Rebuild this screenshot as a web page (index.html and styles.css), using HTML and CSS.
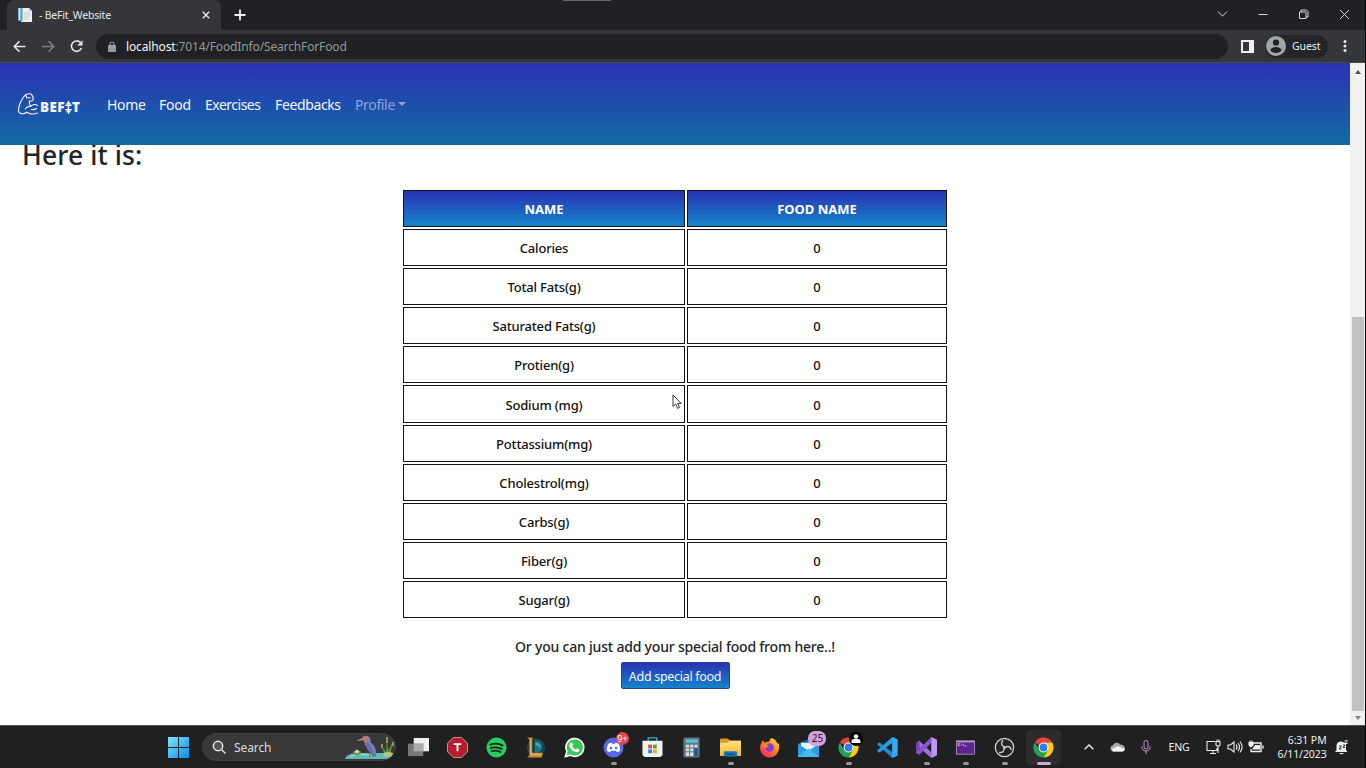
FILE: index.html
```html
<!DOCTYPE html>
<html lang="en">
<head>
<meta charset="utf-8">
<title>- BeFit_Website</title>
<link rel="stylesheet" href="styles.css">
</head>
<body>
<svg width="0" height="0" class="defs" aria-hidden="true">
  <defs>
    <linearGradient id="win" x1="0" y1="0" x2="1" y2="1"><stop offset="0" stop-color="#7de4fb"/><stop offset="1" stop-color="#0a8df0"/></linearGradient>
    <linearGradient id="fire" x1="1" y1="0" x2="0.2" y2="1"><stop offset="0" stop-color="#fff04a"/><stop offset=".45" stop-color="#ff8a20"/><stop offset="1" stop-color="#f5206a"/></linearGradient>
    <linearGradient id="folder" x1="0" y1="0" x2="0" y2="1"><stop offset="0" stop-color="#ffe08a"/><stop offset="1" stop-color="#f8b82a"/></linearGradient>
    <symbol id="chrome" viewBox="0 0 22 22">
      <path d="M11 11 1.9 5.75A10.5 10.5 0 0 1 20.1 5.75H11Z" fill="#e94335"/>
      <path d="M20.1 5.75A10.5 10.5 0 0 1 11 21.5L15.5 13.6 11 5.75Z" fill="#fdc912"/>
      <path d="M1.9 5.75A10.5 10.5 0 0 0 11 21.5L15.5 13.6H6.5Z" fill="#23a455"/>
      <circle cx="11" cy="11" r="5.2" fill="#fff"/><circle cx="11" cy="11" r="4.1" fill="#2f7de9"/>
    </symbol>
  </defs>
</svg>
<div class="screen">
  <header class="tabstrip">
    <div class="tab">
      <svg class="favicon" viewBox="0 0 16 16"><path d="M4 1h8l3 3v11H4z" fill="#e9eef1"/><path d="M1 1h4v12.500H1z" fill="#78b6d8"/><path d="M2.500 1v12.500" stroke="#d5edf8"/><path d="M5 1v13" stroke="#4a738a" stroke-width=".8"/><path d="M12 1v3h3" fill="#b6c4cb"/><path d="M7 6h6M7 8h6M7 10h6M7 12h4" stroke="#c0c7ca" stroke-width=".8"/></svg>
      <span class="tab-title">- BeFit_Website</span>
      <svg class="tab-close" viewBox="0 0 8 8"><path d="m.8.8 6.4 6.4M7.2.8.8 7.2" stroke="#e8eaed" stroke-width="1.4"/></svg>
    </div>
    <svg class="new-tab" viewBox="0 0 12 12"><path d="M6 .5v11M.5 6h11" stroke="#eceef0" stroke-width="1.8"/></svg>
    <i class="grab"></i>
    <svg class="winbtns" viewBox="0 0 140 16" fill="none" stroke="#d6d7d8"><path d="m5 5.500 4.500 4.700L14 5.500M45.500 8.500h9M86.500 6h6.500v6.500h-6.500v-6.500ZM88 6V4h5.500l1.500 1.500v5.500h-2M127 4l9 9M136 4l-9 9"/></svg>
  </header>
  <div class="toolbar">
    <svg class="navbtns" viewBox="0 0 80 18" fill="none" stroke-width="1.6"><path d="M14 9.500H25.500M19.500 4.300 14.300 9.500l5.200 5.200" stroke="#e5e7e9"/><path d="M42 9.500H53.500M48.500 4.300 53.700 9.500 48.500 14.700" stroke="#7d7f82"/><path d="M80.300 5.400A5.200 5.200 0 1 0 81.500 11" stroke="#e5e7e9"/><path d="M82.500 3.200v5.300h-5.300z" fill="#e5e7e9"/></svg>
    <div class="omnibox">
      <svg class="lock" viewBox="0 0 8 11"><rect y="4" width="8" height="7" rx="1" fill="#999b9e"/><path d="M2 5V3a2 2 0 0 1 4 0v2" fill="none" stroke="#999b9e" stroke-width="1.200"/></svg>
      <span class="url"><b>localhost</b>:7014/FoodInfo/SearchForFood</span>
    </div>
    <svg class="panel-icon" viewBox="0 0 13 13"><path fill="#f0f1f2" d="M0 0h13v13H0zM2 2v9h6V2z" fill-rule="evenodd"/></svg>
    <div class="guest">
      <svg viewBox="0 0 20 20"><circle cx="10" cy="10" r="10" fill="#a0a5aa"/><circle cx="10" cy="6.500" r="3.100" fill="#202124"/><path d="M4.200 14c1.500-2.200 3.500-3 5.800-3s4.300.8 5.800 3c-1.300 1.900-3.400 3-5.800 3s-4.500-1.100-5.800-3z" fill="#202124"/></svg>
      <span>Guest</span>
    </div>
    <svg class="dots" viewBox="0 0 4 14" fill="#eceef0"><circle cx="2" cy="2.500" r="1.500"/><circle cx="2" cy="7" r="1.500"/><circle cx="2" cy="11.500" r="1.500"/></svg>
  </div>

  <div class="viewport">
    <main class="page">
      <nav class="navbar">
        <div class="brand">
          <svg class="arm" viewBox="0 0 22 22" fill="none" stroke="#eef3ff" stroke-width="1.150" stroke-linejoin="round" stroke-linecap="round"><path d="M20 12.500c-2-1.500-5-1.300-7 1-.6-1.600-1.700-3-1.200-5.500 1.500.3 3 .1 3.800-1C16 5 15.500 3 14 1.300c-2-.8-4-.7-6 .4C5 5 2 10.500 1 16c-.3 2.800.8 4.500 3.500 4.700 2 .1 3.500-.5 4.700-1.500 3 2 7 2.200 10.800.8M8.500 2.500 9.500 5l3-.3M13 13.500c-2.300-.3-4 .5-5 2.300M14 16.500c2 .3 3.800 0 5-1"/></svg>
          <span class="word">BEF</span>
          <svg class="barbell" viewBox="0 0 7 13" fill="none" stroke="#eef3ff"><path d="M3.500 0v13" stroke-width="1.500"/><path d="M1.500 2.500h4M.3 4.300h6.400M.3 8.700h6.400M1.500 10.500h4" stroke-width="1.500"/></svg>
          <span class="word">T</span>
        </div>
        <a class="n1">Home</a><a class="n2">Food</a><a class="n3">Exercises</a><a class="n4">Feedbacks</a><a class="n5">Profile</a><i class="caret"></i>
      </nav>
      <h1>Here it is:</h1>
      <div class="facts">
        <div class="head">NAME</div><div class="head">FOOD NAME</div>
        <div>Calories</div><div>0</div>
        <div>Total Fats(g)</div><div>0</div>
        <div>Saturated Fats(g)</div><div>0</div>
        <div>Protien(g)</div><div>0</div>
        <div>Sodium (mg)</div><div>0</div>
        <div>Pottassium(mg)</div><div>0</div>
        <div>Cholestrol(mg)</div><div>0</div>
        <div>Carbs(g)</div><div>0</div>
        <div>Fiber(g)</div><div>0</div>
        <div>Sugar(g)</div><div>0</div>
      </div>
      <p class="hint">Or you can just add your special food from here..!</p>
      <button class="add">Add special food</button>
      <svg class="cursor" viewBox="0 0 10 16"><path d="M1 1v11.500l2.700-2.400 1.900 4.300 1.900-.9-1.900-4.100h3.600z" fill="#fff" stroke="#222" stroke-width=".9"/></svg>
    </main>
    <div class="scrollbar"><i class="up"></i><div class="thumb"></div><i class="down"></i></div>
  </div>

  <footer class="taskbar">
    <svg class="start" viewBox="0 0 21 21" fill="url(#win)"><path d="M0 0h10v10H0zM11 0h10v10H11zM0 11h10v10H0zM11 11h10v10H11z"/></svg>
    <div class="search">
      <svg class="glass" viewBox="0 0 14 14" fill="#555" stroke="#e8e8e8" stroke-width="1.500"><circle cx="6" cy="6" r="4.700"/><path d="m9.500 9.500 4 4"/></svg>
      <span>Search</span>
      <svg class="heron" viewBox="0 0 50 26"><path d="M0 25c1-4 6-6 14-6h34c-1 4-4 6-8 6z" fill="#65b9b5"/><path d="M5 23c8-3 15-3 22-1" stroke="#a6ded8" fill="none"/><path d="m11 7 7-3v2z" fill="#b9a99a"/><path d="M17 4c2-3 6-3 8 0 1 3 0 4 2 6l-6 3c1-4-1-5-4-8z" fill="#8f7fa0"/><path d="M17 4c2-2 4-2 5 0 0 2-1 3 0 6l-2 2c0-4-1-5-3-7z" fill="#c27a55"/><path d="M21 8c7-1 11 5 10 15-5-3-11-7-10-15z" fill="#6272b0"/><path d="M24 9c4 3 5 6 6 11" stroke="#8999cd" fill="none"/><path d="M25 17v6m3-3v3" stroke="#5c4f4a"/><ellipse cx="12" cy="19" rx="4" ry="2.400" fill="#6e9556"/><circle cx="12" cy="17.500" r="1.800" fill="#e8d5a4"/><path d="m40 21-4-10 5 7 1-14 1 13 5-9-3 13z" fill="#688f3a"/><path d="M37 10v4M42 3v6M48 8v4" stroke="#a8b64d" stroke-width="1.500"/><ellipse cx="43" cy="20.500" rx="5" ry="2.400" fill="#acc776"/></svg>
    </div>
    <div class="apps">
      <div class="app"><svg viewBox="0 0 22 22"><path d="M6 1h16v14H6z" fill="#eee"/><path d="M0 7h16v13H0z" fill="#777"/><path d="M6 7h10v8H6z" fill="#aaa"/></svg></div>
      <div class="app"><svg viewBox="0 0 22 22"><path d="M6.600.5h8.800l6.100 6.100v8.800l-6.100 6.100H6.600L.5 15.400V6.600z" fill="#b51e30" stroke="#d69299"/><path d="M7 7.500h8M11 7v8" stroke="#fff" stroke-width="2"/></svg></div>
      <div class="app"><svg viewBox="0 0 22 22"><circle cx="11" cy="11" r="10.500" fill="#27cf63"/><path d="M4.500 8c4.500-1.600 9.500-1 13 1M5 11.500c4-1.200 8-.7 11.500 1M5.800 14.800c3.500-.9 6.500-.6 9.300 1" stroke="#17231a" stroke-width="1.900" fill="none" stroke-linecap="round"/></svg></div>
      <div class="app"><svg viewBox="0 0 22 22"><circle cx="11.500" cy="11" r="8.800" fill="#103844" stroke="#35545b"/><path d="M10 4c6-1 9 3 8 8-1 3-4 5-8 5z" fill="#187684"/><path d="M11 6c4 0 6 3 5 6-2-3-3-3-5-3z" fill="#4bb0b7"/><path d="M2.500.5h6l-1 2v14H19l-1.500 5H2.500l2-2.500V3z" fill="#c59440" stroke="#745019" stroke-width=".6"/><path d="M6 2v16h11" stroke="#e9c474" fill="none"/></svg></div>
      <div class="app"><svg viewBox="0 0 22 22"><path d="M1.500 20.500 3 15A9.300 9.300 0 1 1 6.800 19z" fill="#38c758" stroke="#fff" stroke-width="1.700"/><path d="M6.800 6.200c1-.9 1.700-.5 2 .3l.7 1.700-.9 1.200c.9 1.900 2 2.900 3.900 3.800l1.200-1.300 2.300 1.200c.4 2-1.500 3-3 2.800-3.600-.3-8-4.500-7.200-7.700.1-.9.500-1.600 1-2z" fill="#fff"/></svg></div>
      <div class="app run"><svg viewBox="0 0 22 22"><circle cx="11" cy="11" r="10.500" fill="#5667ed"/><path d="M6 6.500 9 6l.7 1h2.600l.7-1 3 .5c1.500 2.500 2.200 5 2 8-1 .8-2.200 1.300-3.500 1.500l-.9-1.500H8.400L7.500 16c-1.300-.2-2.500-.7-3.500-1.500-.2-3 .5-5.500 2-8z" fill="#fff"/><circle cx="8.300" cy="11.500" r="1.400" fill="#5667ed"/><circle cx="13.700" cy="11.500" r="1.400" fill="#5667ed"/></svg><span class="badge red">9+</span></div>
      <div class="app"><svg viewBox="0 0 22 22"><path d="M6.500 5V1h9v4" fill="none" stroke="#3ca8d7" stroke-width="1.400"/><path d="M.5 4h21v15l-2.500 2H3L.5 19z" fill="#f1f1f1"/><path d="M6.500 8h4v4h-4z" fill="#d85335"/><path d="M11.500 8h4v4h-4z" fill="#6b9b38"/><path d="M6.500 13h4v4h-4z" fill="#248bd0"/><path d="M11.500 13h4v4h-4z" fill="#f0ad32"/></svg></div>
      <div class="app"><svg viewBox="0 0 22 22"><rect x="2.500" y=".5" width="17" height="21" rx="1.500" fill="#65747e"/><path d="M5 2.500h12.500V6H5z" fill="#55c3e5"/><path d="M5 8h3.500v3H5zm4.500 0H13v3H9.500zM14 8h3.500v3H14zM5 12h3.500v3H5zm4.500 0H13v3H9.500zM5 16h3.500v4H5zm4.500 0H13v4H9.500z" fill="#d4dde1"/><path d="M14 12h3.500v8H14z" fill="#16589f"/></svg></div>
      <div class="app run"><svg viewBox="0 0 22 22"><path d="M0 3q0-1.500 1.500-1.500H8L11 4h11v4H0z" fill="#d79b25"/><path d="M0 6h8l2-2h12v16H0z" fill="url(#folder)"/><path d="M4 20.500v-4Q4 15 5.500 15h11q1.500 0 1.500 1.500v4z" fill="#1b76b8"/><path d="M7 18h8" stroke="#0b4f86" stroke-width="1.500"/></svg></div>
      <div class="app"><svg viewBox="0 0 22 22"><path d="M13 1c4 1 6 4 6 6l1.500-.5C23 14 18 21.500 11 21.500S-.2 15 1.500 8.500L4 3.500 6 6c2-1 3-1 4.500-.8C11 3 12 2 13 1z" fill="url(#fire)"/><circle cx="11" cy="11" r="4.500" fill="#823ed0"/><path d="M3.500 8c3-1 5-.5 7 1-1 1.500-3 1-4 3-1-.5-2.500-2-3-4z" fill="#ff8a25"/></svg></div>
      <div class="app"><svg viewBox="0 0 22 22"><path d="M0 7 11 2l11 5v14H0z" fill="#1268b2"/><path d="M3 6h16v9H3z" fill="#e9f2f8"/><path d="m0 7 11 7.500L22 7v14H0z" fill="#2c9fe1"/><path d="m0 21 11-9 11 9z" fill="#48b9ef"/></svg><span class="badge pink">25</span></div>
      <div class="app run"><svg viewBox="0 0 22 22"><use href="#chrome"/></svg><span class="badge person"><svg viewBox="0 0 14 14" fill="#fff"><circle cx="7" cy="4.500" r="2.300"/><path d="M2.500 11V9Q2.500 7 5 7h4q2.500 0 2.500 2v2z"/></svg></span></div>
      <div class="app"><svg viewBox="0 0 22 22"><path d="m16 0 5.500 2.500v17L16 22 0 7.500 2.500 5.500 16 16z" fill="#2489ca"/><path d="M16 0v6L2.500 16.500 0 14.500z" fill="#249fe1"/><path d="m16 0 5.500 2.500v17L16 22z" fill="#35aaf0"/></svg></div>
      <div class="app run"><svg viewBox="0 0 22 22"><path d="M0 6 3.500 4 16 16v6L0 8z" fill="#9c70dc"/><path d="M0 6v11l3.500 1.500V4z" fill="#7543ad"/><path d="M3.500 18.500 16 6V0L0 16z" fill="#8856c8"/><path d="m16 0 6 2.800v16.400L16 22z" fill="#bd98f4"/></svg></div>
      <div class="app run"><svg viewBox="0 0 22 22"><path d="M1.500 4h19v14h-19z" fill="#5d248e" stroke="#a88abd"/><path d="M2 5h18" stroke="#d3c4dd"/><path d="M5 7H3.500v2H5M6.500 7v.8m0 1v.5M8 7l1 2.300M10 9.300h2" stroke="#eee" stroke-width=".8" fill="none"/></svg></div>
      <div class="app run"><svg viewBox="0 0 22 22"><circle cx="11" cy="11" r="9.600" fill="#242426" stroke="#d0d0d0" stroke-width="1.300"/><g fill="none" stroke="#c8c8c8" stroke-width="1.500"><path id="blade" d="M11 10.500C7.500 9 7 6 9.500 3.500"/><use href="#blade" transform="rotate(120 11 11)"/><use href="#blade" transform="rotate(240 11 11)"/></g><circle cx="11" cy="11" r="1.500" fill="#c8c8c8"/></svg></div>
      <div class="app run active"><svg viewBox="0 0 22 22"><use href="#chrome"/></svg></div>
    </div>
    <div class="tray">
      <svg class="chev" viewBox="0 0 10 6"><path d="m.7 5.200 4.300-4.200 4.300 4.200" stroke="#eee" fill="none" stroke-width="1.400"/></svg>
      <svg class="cloud" viewBox="0 0 15 10"><path d="M3.500 9.500A3.200 3.200 0 0 1 3 3.200C4 .5 8-.3 10 2.500c3 0 5 2 5 4s-1.500 3-3 3z" fill="#aaa"/><path d="M3.500 9.500c-2-.5-2-3 .5-3.500l4-2 6.500 3c.5 1.500-.5 2.500-2.500 2.500z" fill="#f4f4f4"/></svg>
      <svg class="mic" viewBox="0 0 10 14" fill="none" stroke="#c799d0"><rect x="3" y=".5" width="4" height="8.500" rx="2"/><path d="M.7 6.500c0 6 8.600 6 8.600 0M5 11v3"/></svg>
      <span class="lang">ENG</span>
      <svg class="status" viewBox="0 0 58 16" fill="none" stroke="#eee" stroke-width="1.100"><path d="M9 2.500H1v9h10V9M4 14.500h6M7 11.500v3M10 2.500h4v3.500l-1 1h-2l-1-1zM11 .5v2m2-2v2M12 7v7"/><path d="M22 6h2.500L28 3v10l-3.500-3H22zM30 5.500q2 2.500 0 5M32 4q3 4 0 8M34 2.500q4.300 5.500 0 11"/><path d="M47 4h8v8.500H45V10M57 6.500v3" stroke-width="1.400"/><path d="M46.500 9.500 49 6h5v4.500h-7.500z" fill="#eee" stroke="none"/><path d="M43 3.500h4V6l-2 2-2-2zM44 1.500v2m2-2v2" fill="#eee"/></svg>
      <div class="clock"><span>6:31 PM</span><span>6/11/2023</span></div>
      <svg class="bell" viewBox="0 0 13 15"><path d="M1.500 10V6Q1.500 1.500 6 1.500L11 3v7l1.500 2H0zM4 13h5q-2.500 2.500-5 0z" fill="#eee"/><path d="M4 6h2.500L4 9h2.500M8 5h2L8 7.500h2" stroke="#222" stroke-width=".9" fill="none"/><path d="M9.500.8h3L9.800 3.500h3" stroke="#eee" stroke-width=".9" fill="none"/></svg>
    </div>
  </footer>
</div>
</body>
</html>
```

FILE: styles.css
```css
* { box-sizing: border-box; }
body { margin: 0; font-family: "Noto Sans", "Open Sans", sans-serif; overflow: hidden; }
svg { display: block; flex: none; overflow: visible; }
.defs { position: absolute; }
.screen { width: 1366px; height: 768px; display: flex; flex-direction: column; background: #202124; border-right: 1px solid #000; }
span, a { white-space: nowrap; }

.tabstrip { height: 30px; flex: none; display: flex; align-items: center; background: #202124; padding-left: 7px; }
.tab { width: 214px; height: 30px; background: #35363a; border-radius: 7px 7px 0 0; display: flex; align-items: center; padding: 0 11px 0 10px; }
.favicon { width: 16px; height: 16px; }
.tab-title { margin-left: 6px; font-size: 10.5px; color: #e4e6e8; letter-spacing: -0.2px; flex: 1; }
.tab-close { width: 8px; height: 8px; }
.new-tab { width: 12px; height: 12px; margin-left: 13px; }
.grab { width: 48px; height: 1px; background: #66686a; align-self: flex-start; margin-left: 317px; }
.winbtns { width: 140px; height: 16px; margin-left: auto; margin-right: 12px; margin-bottom: 3px; }

.toolbar { height: 33px; flex: none; display: flex; align-items: center; background: #35363a; border-bottom: 1px solid #494a4e; }
.navbtns { width: 80px; height: 18px; }
.omnibox { margin-left: 16px; width: 1132px; height: 25px; border-radius: 13px; background: #202124; display: flex; align-items: center; padding-left: 12px; }
.lock { width: 8px; height: 11px; }
.url { margin-left: 10px; font-size: 12px; color: #96989b; letter-spacing: -0.14px; padding-top: 1px; }
.url b { font-weight: 400; color: #f2f3f4; }
.panel-icon { width: 13px; height: 13px; margin-left: 13px; }
.guest { margin-left: 11px; width: 63px; height: 23px; border-radius: 12px; background: #242528; display: flex; align-items: center; color: #eceef0; font-size: 10.5px; letter-spacing: -0.1px; padding-left: 1px; gap: 6px; }
.guest svg { width: 20px; height: 20px; }
.dots { width: 4px; height: 14px; margin-left: 15px; }

.viewport { height: 662px; flex: none; display: flex; background: #fff; }
.page { width: 1350px; height: 662px; display: flex; flex-direction: column; align-items: center; position: relative; }
.navbar { position: relative; z-index: 1; width: 100%; height: 82px; flex: none; display: flex; align-items: center; background: linear-gradient(#2a32b3, #126ba3); color: #f2f5ff; font-size: 14px; padding-left: 17px; }
.brand { display: flex; align-items: center; width: 90px; }
.arm { width: 23px; height: 22px; }
.word { font: 800 13.5px/16px "Open Sans", sans-serif; letter-spacing: 0.4px; margin-top: 6px; }
.barbell { width: 7px; height: 13px; margin: 7px 0 0; }
.navbar a { flex: none; }
.n1 { width: 52px; letter-spacing: -0.35px; } .n2 { width: 46px; letter-spacing: -0.25px; } .n3 { width: 70px; letter-spacing: -0.5px; } .n4 { width: 80px; letter-spacing: -0.37px; }
.n5 { width: 43px; color: #8fa3dd; letter-spacing: -0.35px; }
.caret { border: 4px solid transparent; border-top-color: #8fa3dd; border-bottom: 0; }
h1 { align-self: flex-start; margin: -7px 0 0 22px; height: 34px; font-size: 26.5px; line-height: 34px; font-weight: 500; color: #212529; letter-spacing: 0.1px; }
.facts { margin-top: 18px; flex: none; display: grid; grid-template-columns: 282px 260px; grid-auto-rows: 37.1px; gap: 2px; font-size: 13px; font-weight: 500; color: #111; letter-spacing: -0.18px; }
.facts div { border: 1px solid #151515; display: flex; align-items: center; justify-content: center; padding-top: 1px; }
.facts .head { background: linear-gradient(#2a32b3, #1584cc); color: #fff; font-weight: 700; font-size: 13px; letter-spacing: 0; }
.hint { margin: 18px 0 0; font-size: 14px; line-height: 22px; font-weight: 500; color: #212529; white-space: nowrap; letter-spacing: -0.2px; }
.add { margin: 4px 0 0; width: 109px; height: 27px; padding: 1px 0 0; border: 1px solid #26438f; border-radius: 2px; background: linear-gradient(#2a32b3, #1584cc); color: #f3f6ff; font: 400 12.5px "Noto Sans", sans-serif; letter-spacing: -0.3px; white-space: nowrap; }
.cursor { position: absolute; left: 672px; top: 331px; width: 10px; height: 16px; }
.scrollbar { width: 15px; background: #f1f1f1; display: flex; flex-direction: column; align-items: center; padding: 7px 0 5px; }
.up { border: 3.5px solid transparent; border-bottom: 4px solid #505050; border-top: 0; }
.thumb { width: 12px; height: 394px; background: #c1c1c1; margin-top: 243px; }
.down { border: 3.5px solid transparent; border-top: 4px solid #858585; border-bottom: 0; margin-top: 5px; }

.taskbar { height: 43px; flex: none; display: flex; align-items: center; background: #202020; border-top: 1px solid #535756; color: #eee; }
.start { width: 21px; height: 21px; margin-left: 168px; }
.search { margin-left: 13px; width: 194px; height: 28px; border-radius: 14px; background: #383838; border: 1px solid #414141; display: flex; align-items: center; padding-left: 9px; overflow: hidden; }
.glass { width: 14px; height: 14px; }
.search span { margin-left: 8px; font-size: 12px; color: #ddd; flex: 1; letter-spacing: -0.1px; }
.heron { width: 50px; height: 26px; }
.apps { display: flex; margin-left: 2.5px; flex: none; }
.app { width: 39.1px; height: 42px; position: relative; display: flex; align-items: center; justify-content: center; }
.app > svg { width: 21px; height: 21px; position: relative; }
.run::after { content: ""; position: absolute; left: 17px; bottom: 3px; width: 6px; height: 3px; border-radius: 2px; background: #989898; }
.active::before { content: ""; position: absolute; inset: 4px 2px 3px; background: #2c2c2c; border-radius: 4px; }
.active::after { width: 14px; left: 13px; background: #d5a4d9; }
.badge { position: absolute; top: 6px; left: 22px; height: 13px; border-radius: 7px; font-size: 9px; line-height: 13px; text-align: center; }
.red { width: 13px; background: #dd4a4d; color: #fff; }
.pink { width: 18px; height: 15px; top: 5px; left: 19px; line-height: 15px; background: #d6a0dc; color: #222; font-size: 10px; }
.person { width: 14px; height: 14px; background: #000; top: 6px; left: 20px; }
.tray { display: flex; align-items: center; margin-left: 20.5px; }
.chev { width: 10px; height: 6px; }
.cloud { width: 15px; height: 10px; margin-left: 16px; }
.mic { width: 10px; height: 14px; margin-left: 16px; }
.lang { font-size: 10.5px; width: 22px; margin: 0 15px 0 18px; letter-spacing: -0.15px; }
.status { width: 58px; height: 16px; }
.clock { width: 52px; margin-left: 11px; display: flex; flex-direction: column; align-items: flex-end; font-size: 10.5px; line-height: 14px; letter-spacing: -0.08px; padding-bottom: 1px; }
.bell { width: 13px; height: 15px; margin-left: 8px; }
```
